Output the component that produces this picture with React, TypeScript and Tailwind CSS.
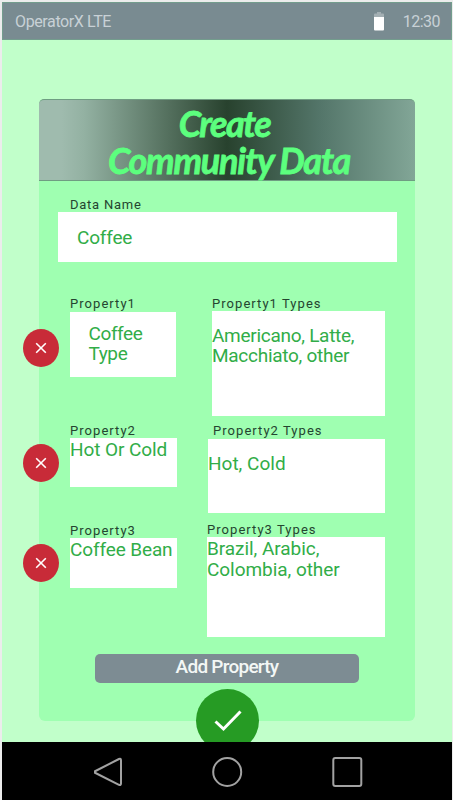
type Field = {
  label: string;
  lines: string[];
  column: string;
  labelClass: string;
  boxClass: string;
};

type Row = { rowClass: string; buttonClass: string; name: Field; types: Field };

const rows: Row[] = [
  {
    rowClass: 'mt-[33px] h-[121px]',
    buttonClass: 'mt-[34px]',
    name: {
      label: 'Property1',
      lines: ['Coffee', 'Type'],
      column: 'ml-[11px] w-[106px]',
      labelClass: 'h-[17px]',
      boxClass: 'h-[65px] pt-[12px] pl-[18.5px] leading-[20px] tracking-[-0.4px]',
    },
    types: {
      label: 'Property1 Types',
      lines: ['Americano, Latte,', 'Macchiato, other'],
      column: 'ml-[36px] w-[173px]',
      labelClass: 'h-[16px]',
      boxClass: 'h-[105px] pt-[15px] leading-[20px] tracking-[-0.28px]',
    },
  },
  {
    rowClass: 'mt-[6px] h-[91px]',
    buttonClass: 'mt-[22px]',
    name: {
      label: 'Property2',
      lines: ['Hot Or Cold'],
      column: 'ml-[11px] w-[107px]',
      labelClass: 'h-[16px]',
      boxClass: 'h-[49px] pt-[2px] leading-[20px] tracking-[-0.08px]',
    },
    types: {
      label: 'Property2 Types',
      lines: ['Hot, Cold'],
      column: 'ml-[31px] w-[177px]',
      labelClass: 'h-[17px] pl-[5px]',
      boxClass: 'h-[74px] pt-[15px] leading-[20px]',
    },
  },
  {
    rowClass: 'mt-[8px] h-[116px]',
    buttonClass: 'mt-[23px]',
    name: {
      label: 'Property3',
      lines: ['Coffee Bean'],
      column: 'ml-[11px] w-[107px] pt-px',
      labelClass: 'h-[16px]',
      boxClass: 'h-[50px] pt-[2px] leading-[20px] tracking-[-0.12px]',
    },
    types: {
      label: 'Property3 Types',
      lines: ['Brazil, Arabic,', 'Colombia, other'],
      column: 'ml-[30px] w-[178px]',
      labelClass: 'h-[16px]',
      boxClass: 'h-[100px] pt-px leading-[21px] tracking-[-0.05px]',
    },
  },
];

function Label({ text, className }: { text: string; className: string }) {
  return (
    <div className={`text-[13px] leading-[18px] whitespace-nowrap text-[#244430] ${className}`}>{text}</div>
  );
}

function FieldColumn({ field }: { field: Field }) {
  return (
    <div className={`shrink-0 ${field.column}`}>
      <Label text={field.label} className={`tracking-[1.05px] ${field.labelClass}`} />
      <div className={`bg-white text-[19px] whitespace-nowrap text-[#31ad48] ${field.boxClass}`}>
        {field.lines.map((line) => (
          <div key={line}>{line}</div>
        ))}
      </div>
    </div>
  );
}

function PropertyRow({ row }: { row: Row }) {
  return (
    <div className={`-ml-[16px] flex items-start ${row.rowClass}`}>
      <button
        className={`flex h-[38px] w-[36px] shrink-0 items-center justify-center rounded-[50%] bg-[#c82b38] ${row.buttonClass}`}
      >
        <svg width="12" height="12" viewBox="0 0 12 12" fill="none" stroke="#fff" strokeWidth="1.6">
          <path d="M1.200 1.200l9.600 9.600M10.800 1.200L1.200 10.800" />
        </svg>
      </button>
      <FieldColumn field={row.name} />
      <FieldColumn field={row.types} />
    </div>
  );
}

export default function App() {
  return (
    <div className="h-[800px] w-[453px] overflow-hidden bg-[#ececec] pt-[2px] pl-[2px] font-[Roboto,sans-serif]">
      <div className="flex h-[798px] w-[450px] flex-col bg-[#c1ffca]">
        <header className="flex h-[38px] shrink-0 items-center border border-[#739d8d] bg-[#798b91] pt-px pr-[11px] pl-[12px] text-[16px] text-[#c8d1d6]">
          <span className="tracking-[-0.38px]">OperatorX LTE</span>
          <svg className="ml-auto" width="10" height="19" viewBox="0 0 10 19">
            <path d="M3 0h4v1.500h2q1 0 1 1V6H0V2.500q0-1 1-1h2z" fill="#a3afb3" />
            <path d="M0 5h10v12.500q0 1-1 1H1q-1 0-1-1z" fill="#fff" />
          </svg>
          <span className="ml-[19px] tracking-[-0.5px]">12:30</span>
        </header>

        <main className="h-[702px] shrink-0 overflow-hidden pt-[59px] pl-[37px]">
          <section className="h-[622px] w-[376px] rounded-[6px] bg-[#9fffb1]">
            <h1 className="flex h-[82px] flex-col items-center rounded-t-[5px] border-y border-[#6f9d82] bg-[linear-gradient(90deg,#9fbbae_0%,#9fbbae_6%,#93b1a2_12%,#28422e_50%,#54766a_75%,#82a697_100%)] pt-[5px] text-center font-[Lato,sans-serif] text-[36px] leading-[37px] font-bold text-[#5cff7e] italic [-webkit-text-stroke:0.8px_#5cff7e]">
              <span className="-ml-[5px] tracking-[-1.600px]">Create</span>
              <span className="ml-[4px] tracking-[-1.200px] whitespace-nowrap">Community Data</span>
            </h1>

            <div className="pt-[15px] pl-[19px]">
              <Label text="Data Name" className="h-[16px] pl-[12px] tracking-[0.75px]" />
              <div className="flex h-[50px] w-[339px] items-center bg-white pt-[2px] pl-[19px] text-[19px] tracking-[-0.2px] text-[#31ad48]">
                Coffee
              </div>
            </div>

            {rows.map((row) => (
              <PropertyRow key={row.name.label} row={row} />
            ))}

            <button className="mt-[17px] ml-[56px] flex h-[29px] w-[264px] items-center justify-center rounded-[5px] bg-[#7d8c93] pb-[2px] text-[19px] font-medium tracking-[-0.75px] text-[#f3f7f5]">
              Add Property
            </button>
            <button className="mt-[6px] ml-[157px] flex size-[63px] items-center justify-center rounded-full bg-[#269b24]">
              <svg width="28" height="22" viewBox="0 0 28 22" fill="none" stroke="#fff" strokeWidth="3">
                <path d="M1.500 11.500L9.500 19L26.500 1.500" />
              </svg>
            </button>
          </section>
        </main>

        <nav className="flex h-[58px] shrink-0 items-start bg-black pt-[14px] pl-[92px]">
          <svg
            width="270"
            height="32"
            viewBox="0 0 270 32"
            fill="none"
            stroke="#a2a2a2"
            strokeWidth="2"
            strokeLinejoin="round"
            className="shrink-0"
          >
            <path d="M1.500 15Q-.5 16 1.500 17L25 28.800Q27 29.500 27 27.500V4.500Q27 2 25 3Z" />
            <circle cx="133.200" cy="16" r="14" />
            <rect x="239.300" y="2" width="28" height="28" rx="2" />
          </svg>
        </nav>
      </div>
    </div>
  );
}
